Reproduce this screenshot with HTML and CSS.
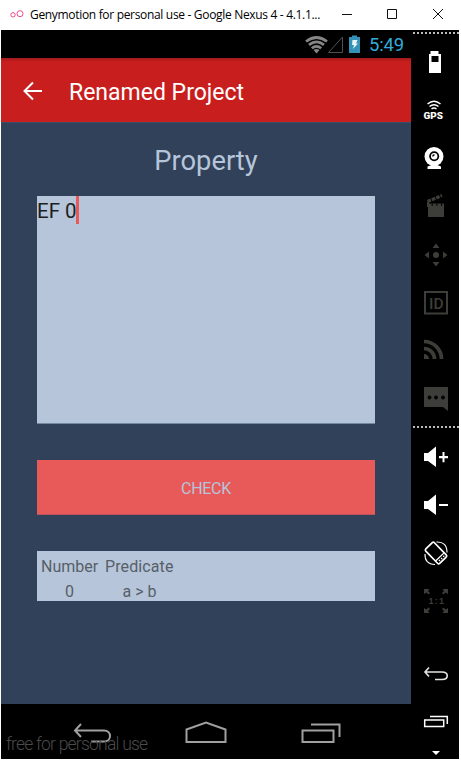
FILE: index.html
```html
<!DOCTYPE html>
<html lang="en">
<head>
<meta charset="utf-8">
<title>Genymotion</title>
<link rel="stylesheet" href="styles.css">
</head>
<body>
<header class="titlebar">
  <svg class="logo" width="14" height="8" fill="none" stroke="#ed4c8c"><circle cx="3" cy="4.8" r="2.2"/><circle cx="10" cy="3.7" r="3"/></svg>
  <span class="window-title">Genymotion for personal use - Google Nexus 4 - 4.1.1...</span>
  <svg class="controls" width="106" height="12" fill="none" stroke="#111"><path d="M0 6.500H10M45.500 1.500h9v9h-9zM91 1l10 10M101 1L91 11"/></svg>
</header>
<div class="window">
  <main class="device">
    <div class="status">
      <svg width="60" height="22" viewBox="0 0 60 22">
        <g fill="none" stroke="#858585" stroke-width="2.700"><path d="M1 6.500Q11.500-1.500 22 6.500"/><path d="M4 9.900Q11.500 4 19 9.900"/><path d="M6.800 13.200Q11.500 9.500 16.200 13.200"/></g>
        <path d="M8.500 15q3-2 6 0l-3 3.500z" fill="#858585"/>
        <path d="M23.500 17.500h14V2z" fill="none" stroke="#505050"/>
        <path d="M44 2h3V.500h5V2h3v16H44z" fill="#3492b8"/>
        <path d="M47.500 5h5l-1.500 3.500h2L48 14l1-4h-2z" fill="#e8f4f8"/>
      </svg>
      <span class="clock">5:49</span>
    </div>
    <div class="appbar">
      <svg width="20" height="20" fill="none" stroke="#fff" stroke-width="2"><path d="M19 10H2M10 1.500L1.500 10l8.500 8.500"/></svg>
      <h1>Renamed Project</h1>
    </div>
    <section class="content">
      <h2>Property</h2>
      <div class="editor"><span class="formula">EF 0</span><i class="caret"></i></div>
      <button class="check">CHECK</button>
      <div class="predicates">
        <span>Number</span><span class="wide">Predicate</span>
        <span class="center">0</span><span class="center">a &gt; b</span>
      </div>
    </section>
    <nav class="navbar">
      <svg width="410" height="55" fill="none" stroke="#a0a0a0" stroke-width="2">
        <path d="M80 20l-6 6.500 6 6.500M74 26.500h29c8 0 8 11 0 11H90"/>
        <path d="M185.500 25.500l19.500-7 19.500 7v12.500h-39z"/>
        <path d="M301.500 26.500h31v11.500h-31zM310 20.500h28.500V33"/>
      </svg>
      <span class="watermark">free for personal use</span>
    </nav>
  </main>
  <aside class="tools">
    <div class="dots"></div>
    <div class="group">
      <svg viewBox="0 0 48 48"><path d="M19.500 13h8v3H30v19H18V16h1.500z" fill="#fff"/><path d="M20.500 18h7v6h-7z" fill="#000"/></svg>
      <svg viewBox="0 0 48 48"><g fill="none" stroke="#fff" stroke-width="1.500"><path d="M16.500 18q6.500-5.500 13 0M18.500 20.500q4.500-3.500 9 0M20.500 23q2.500-1.800 5 0"/></g><text x="12.500" y="32.500" class="gps" textLength="19.500" lengthAdjust="spacingAndGlyphs">GPS</text></svg>
      <svg viewBox="0 0 48 48"><path d="M16.500 35v-2.500l5.500-2h3l5 2V35z" fill="#fff"/><circle cx="23" cy="22.500" r="9.500" fill="#fff"/><circle cx="23.200" cy="22.300" r="5" fill="#000"/><circle cx="23.200" cy="22.300" r="3.200" fill="#fff"/><path d="M21.800 22.500q0-1.500 1.700-1.700" stroke="#000" stroke-width="1.500" fill="none"/></svg>
      <svg viewBox="0 0 48 48" class="off"><path d="M17 24h16v11H17z"/><path d="M17 23h16M16.500 19.500L31 13.500" fill="none" stroke="#3d3d39" stroke-width="3.200" stroke-dasharray="3.700 1"/><path d="M16 20h2v5h-2z"/></svg>
      <svg viewBox="0 0 48 48" class="off"><circle cx="25" cy="25" r="3"/><path d="M25 13.500l3.500 4.500h-7zM25 36.500l-3.500-4.500h7zM13.500 25l4.500-3.500v7zM36.500 25L32 28.500v-7z"/></svg>
      <svg viewBox="0 0 48 48" class="off"><path d="M14 14h22v21.500H14z" fill="none" stroke="#3d3d39" stroke-width="2"/><text x="18" y="30.500" class="id-label" textLength="14.500" lengthAdjust="spacingAndGlyphs">ID</text></svg>
      <svg viewBox="0 0 48 48" class="off"><path d="M13 28a5 5 0 0 1 5 5h-5z"/><path d="M13 15.500A17.500 17.500 0 0 1 30.500 33M13 22.500A10.500 10.500 0 0 1 23.500 33" fill="none" stroke="#3d3d39" stroke-width="3.700"/></svg>
      <svg viewBox="0 0 48 48" class="off"><path d="M13 13h24v24l-5-4H13z"/><g fill="#000"><circle cx="18.500" cy="23.500" r="1.900"/><circle cx="25" cy="23.500" r="1.900"/><circle cx="32" cy="23.500" r="1.900"/></g></svg>
    </div>
    <div class="dots"></div>
    <div class="group main">
      <svg viewBox="0 0 48 48"><path d="M13 20h4l8-6.500V34l-8-6h-4zM28 23h3.500v-4h2v4H37v2.200h-3.500v4h-2v-4H28z" fill="#fff"/></svg>
      <svg viewBox="0 0 48 48"><path d="M13 20h4l8-6.500V34l-8-6h-4zM28 23h9v2h-9z" fill="#fff"/></svg>
      <svg viewBox="0 0 48 48" fill="none" stroke="#fff"><g transform="rotate(-44 25 24)"><rect x="19" y="14" width="12" height="20" rx="1.500" stroke-width="1.700"/><path d="M19.500 29.500h11M21.500 31.800h1.500M24.500 31.800h1.500M27.500 31.800h1.500" stroke-width="1.300"/></g><path d="M25.500 13q10.500-.5 10.500 10.500M24 35.500q-10.500-.5-10-10.500" stroke-width="1.100"/></svg>
      <svg viewBox="0 0 48 48" class="off"><path d="M13 12h5.500l-1.500 2 2 2-1.500 1.500-2-2L13 17zM37 12h-5.500l1.500 2-2 2 1.500 1.500 2-2L37 17zM13 36h5.500L17 34l2-2-1.500-1.500-2 2L13 31zM37 36h-5.500l1.500-2-2-2 1.500-1.500 2 2L37 31z"/><text x="17.500" y="27" class="ratio" textLength="15.500" lengthAdjust="spacing">1:1</text></svg>
    </div>
    <div class="group bottom">
      <svg viewBox="0 0 48 48" fill="none" stroke="#e4e4df" stroke-width="1.600"><path d="M18 17.500l-4 4.500 4 4.500M14 22h17c7 0 7 7.500 0 7.500h-7"/></svg>
      <svg viewBox="0 0 48 48" fill="none" stroke="#fff" stroke-width="1.500"><path d="M13.700 22h19v6.600h-19zM19 18.600h17.300V26"/></svg>
      <svg viewBox="0 0 48 10" class="more"><path d="M21 5h8l-4 4z" fill="#fff"/></svg>
    </div>
  </aside>
</div>
</body>
</html>
```
FILE: styles.css
```css
* { box-sizing: border-box; }
body { margin: 0; width: 461px; height: 761px; background: #fff; font-family: Roboto, sans-serif; overflow: hidden; }
svg { display: block; flex: none; }
.titlebar { height: 30px; display: flex; align-items: center; padding-left: 10px; }
.logo { margin-top: -3px; }
.window-title { width: 312px; padding-left: 6px; font: 12px/28px "Open Sans", sans-serif; letter-spacing: -.32px; white-space: nowrap; color: #000; }
.controls { margin-left: 6px; margin-top: -2px; }
.window { display: flex; width: 458px; height: 729px; margin-left: 1px; background: #000; }
.device { width: 410px; display: flex; flex-direction: column; }
.status { height: 28px; display: flex; align-items: center; padding-left: 304px; }
.status svg { margin-top: 4px; }
.clock { margin: 2px 0 0 4px; color: #33abda; font-size: 18.5px; letter-spacing: -.2px; }
.appbar { height: 64px; display: flex; align-items: center; padding: 2px 0 0 22px; gap: 26px; color: #fff; background: linear-gradient(#a51b1b, #c91e1e 4px); }
h1 { margin: 3px 0 0; font-size: 23px; line-height: 30px; font-weight: 400; white-space: nowrap; }
.appbar svg { margin-top: -1px; }
.content { height: 582px; padding: 0 36px; background: #304159; border-top: 1px solid #3a506a; }
h2 { margin: 0; padding-top: 20px; height: 73px; font-size: 27.3px; line-height: 36px; font-weight: 400; text-align: center; color: #b6c5d9; }
.editor { height: 228px; display: flex; background: #b6c5d9; border-bottom: 1px solid #7588a1; }
.formula { width: 39px; font-size: 20.5px; line-height: 30px; color: #1c1e21; white-space: nowrap; }
.caret { width: 2.5px; height: 28px; background: #e85959; }
.check { display: block; width: 100%; height: 55px; margin: 36px 0; padding: 3px 0 0; border: 0; border-bottom: 1px solid #bc5260; background: #e85959; color: #b6c5d9; font: 16px Roboto, sans-serif; letter-spacing: -.3px; }
.predicates { height: 50px; display: grid; grid-template-columns: 57px 69px; grid-template-rows: 25px 25px; column-gap: 7px; padding: 2px 4px; background: #b6c5d9; color: #565f69; font-size: 16px; line-height: 28px; }
.wide { letter-spacing: .1px; }
.center { text-align: center; }
.navbar { height: 55px; position: relative; }
.watermark { position: absolute; left: 5px; top: 28px; font-size: 17.5px; line-height: 24px; font-weight: 300; letter-spacing: -.78px; color: #4a4a4a; white-space: nowrap; }
.tools { width: 48px; }
.dots { height: 2px; margin: 2px 0 0 2px; background: repeating-linear-gradient(90deg, #bbb 0 2px, #000 2px 4px); }
.group { display: flex; flex-direction: column; padding-top: 4px; }
.group + .dots { margin-top: 4px; }
.group svg { width: 48px; height: 48px; }
.group .more { height: 10px; }
.main { padding-top: 5px; }
.bottom { padding-top: 25px; }
.off { fill: #3d3d39; }
.gps { font: 900 9px Roboto, sans-serif; fill: #fff; }
.id-label { font: 500 15.5px Roboto, sans-serif; }
.ratio { font: 700 9px "Liberation Sans", sans-serif; }
```
